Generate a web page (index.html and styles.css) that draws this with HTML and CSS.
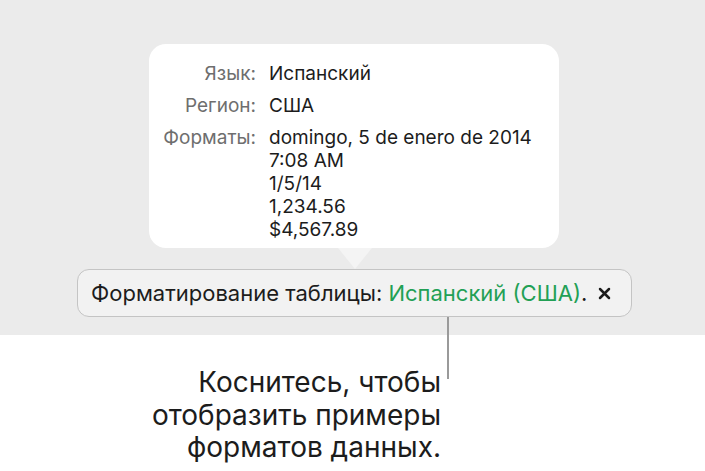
FILE: index.html
```html
<!DOCTYPE html>
<html lang="ru">
<head>
    <meta charset="UTF-8">
    <meta name="viewport" content="width=device-width, initial-scale=1.0">
    <title>Форматирование таблицы</title>
    <link rel="stylesheet" href="styles.css">
</head>
<body>
    <div class="page">
        <div class="screen">
            <div class="popover">
                <div class="label">Язык:</div>
                <div class="value">Испанский</div>
                <div class="label">Регион:</div>
                <div class="value">США</div>
                <div class="label">Форматы:</div>
                <div class="value">
                    domingo, 5 de enero de 2014<br>
                    7:08 AM<br>
                    1/5/14<br>
                    1,234.56<br>
                    $4,567.89
                </div>
            </div>
            <div class="format-bar">
                <span class="bar-text">Форматирование таблицы: <span class="lang">Испанский (США)</span>.</span>
                <span class="close">
                    <svg width="13" height="13" viewBox="0 0 13 13">
                        <path d="M2 2 L11 11 M11 2 L2 11" stroke="#1c1c1c" stroke-width="2.5" stroke-linecap="round"/>
                    </svg>
                </span>
            </div>
        </div>
        <!-- выноска к подписи -->
        <div class="leader"></div>
        <p class="caption">Коснитесь, чтобы<br>отобразить примеры<br>форматов данных.</p>
    </div>
</body>
</html>
```

FILE: styles.css
```css
body {
    margin: 0;
    background-color: #fff;
    font-family: 'Inter', 'Liberation Sans', sans-serif;
    color: #1c1c1c;
}
.page {
    position: relative;
    width: 705px;
    height: 471px;
    overflow: hidden;
}
.screen {
    height: 335px;
    box-sizing: border-box;
    padding-top: 44px;
    background-color: #ebebeb;
    display: flex;
    flex-direction: column;
    align-items: center;
}
.popover {
    position: relative;
    width: 410px;
    margin-left: 3px;
    box-sizing: border-box;
    padding: 18px 14px 7px 14px;
    background-color: #fff;
    border-radius: 17px;
    display: grid;
    grid-template-columns: 93px 1fr;
    column-gap: 13px;
    row-gap: 9px;
    font-size: 19px;
    line-height: 23px;
}
.popover::after {
    content: "";
    position: absolute;
    left: 189px;
    bottom: -21px;
    border-left: 17px solid transparent;
    border-right: 17px solid transparent;
    border-top: 21px solid #f4f4f4;
}
.label {
    text-align: right;
    color: #6e6e6e;
}
.value {
    color: #1c1c1c;
}
.format-bar {
    margin-top: 21px;
    margin-left: 4px;
    width: 555px;
    height: 48px;
    box-sizing: border-box;
    padding: 0 20px 0 13px;
    border: 1px solid #c4c4c4;
    border-radius: 12px;
    background-color: #f2f2f2;
    display: flex;
    align-items: center;
    justify-content: space-between;
    font-size: 22px;
}
.lang {
    color: #22a055;
}
.close {
    display: flex;
}
.leader {
    position: absolute;
    left: 447px;
    top: 317px;
    width: 2px;
    height: 62px;
    background-color: #9a9a9a;
}
.caption {
    width: 441px;
    margin: 31px 0 0 0;
    text-align: right;
    font-size: 28px;
    line-height: 32.5px;
    color: #1c1c1c;
}
```
